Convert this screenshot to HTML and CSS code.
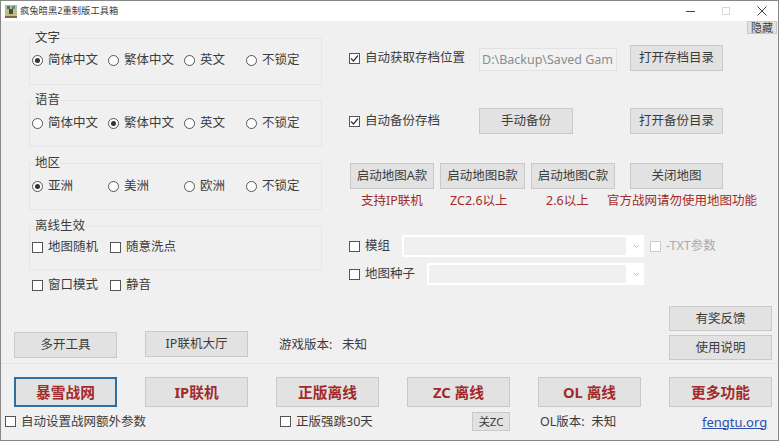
FILE: index.html
```
<!DOCTYPE html>
<html lang="zh-CN">
<head>
    <meta charset="utf-8" />
    <title>疯兔暗黑2重制版工具箱</title>
    <link rel="stylesheet" href="styles.css">
</head>
<body>
<div class="window">

    <header class="titlebar">
        <svg class="app-icon" width="12" height="13" viewBox="0 0 12 13">
            <rect width="12" height="13" fill="#a9c2a4"/>
            <rect x="2" y="1" width="3" height="3" fill="#5f7655"/>
            <rect x="7" y="1" width="3" height="3" fill="#74866a"/>
            <rect x="4" y="4" width="4" height="5" fill="#4c4c3c"/>
            <rect y="9" width="12" height="2" fill="#cdb878"/>
            <rect y="11" width="12" height="2" fill="#7d6a42"/>
        </svg>
        <span class="title">疯兔暗黑2重制版工具箱</span>
        <div class="win-btns">
            <svg width="9" height="9" viewBox="0 0 9 9"><path d="M0 4.5H9" stroke="#444"/></svg>
            <svg width="8" height="8" viewBox="0 0 8 8"><rect x=".5" y=".5" width="7" height="7" fill="none" stroke="#d8d8d8"/></svg>
            <svg width="10" height="10" viewBox="0 0 10 10"><path d="M.5 .5L9.5 9.5M9.5 .5L.5 9.5" stroke="#444"/></svg>
        </div>
    </header>

    <section class="top">
        <div class="left">
            <fieldset class="group">
                <legend>文字</legend>
                <div class="choices">
                    <label class="opt"><span class="radio radio--on"></span>简体中文</label>
                    <label class="opt"><span class="radio"></span>繁体中文</label>
                    <label class="opt"><span class="radio"></span>英文</label>
                    <label class="opt"><span class="radio"></span>不锁定</label>
                </div>
            </fieldset>
            <fieldset class="group">
                <legend>语音</legend>
                <div class="choices">
                    <label class="opt"><span class="radio"></span>简体中文</label>
                    <label class="opt"><span class="radio radio--on"></span>繁体中文</label>
                    <label class="opt"><span class="radio"></span>英文</label>
                    <label class="opt"><span class="radio"></span>不锁定</label>
                </div>
            </fieldset>
            <fieldset class="group">
                <legend>地区</legend>
                <div class="choices">
                    <label class="opt"><span class="radio radio--on"></span>亚洲</label>
                    <label class="opt"><span class="radio"></span>美洲</label>
                    <label class="opt"><span class="radio"></span>欧洲</label>
                    <label class="opt"><span class="radio"></span>不锁定</label>
                </div>
            </fieldset>
            <fieldset class="group group--short">
                <legend>离线生效</legend>
                <div class="checks">
                    <label class="opt"><span class="box"></span>地图随机</label>
                    <label class="opt"><span class="box"></span>随意洗点</label>
                </div>
            </fieldset>
            <div class="checks checks--loose">
                <label class="opt"><span class="box"></span>窗口模式</label>
                <label class="opt"><span class="box"></span>静音</label>
            </div>
        </div>

        <div class="right">
            <button class="btn btn--hide">隐藏</button>

            <div class="save-row">
                <label class="opt"><span class="box"><svg width="9" height="9" viewBox="0 0 9 9"><path d="M1 4.5L3.5 7L8 1.5" fill="none" stroke="#333" stroke-width="1.2"/></svg></span>自动获取存档位置</label>
                <div class="path">D:\Backup\Saved Gam</div>
                <button class="btn btn--tall">打开存档目录</button>
            </div>

            <div class="save-row save-row--backup">
                <label class="opt"><span class="box"><svg width="9" height="9" viewBox="0 0 9 9"><path d="M1 4.5L3.5 7L8 1.5" fill="none" stroke="#333" stroke-width="1.2"/></svg></span>自动备份存档</label>
                <button class="btn btn--tall btn--manual">手动备份</button>
                <button class="btn btn--tall">打开备份目录</button>
            </div>

            <div class="map-row">
                <button class="btn btn--tall">启动地图A款</button>
                <button class="btn btn--tall">启动地图B款</button>
                <button class="btn btn--tall">启动地图C款</button>
                <button class="btn btn--tall">关闭地图</button>
            </div>
            <div class="hints">
                <span>支持IP联机</span>
                <span>ZC2.6以上</span>
                <span>2.6以上</span>
                <span>官方战网请勿使用地图功能</span>
            </div>

            <div class="combo-row combo-row--mod">
                <label class="opt"><span class="box"></span>模组</label>
                <div class="combo combo--mod">
                    <svg width="7" height="5" viewBox="0 0 7 5"><path d="M1 1L3.5 3.5L6 1" fill="none" stroke="#bbb"/></svg>
                </div>
                <label class="opt opt--off"><span class="box"></span>-TXT参数</label>
            </div>
            <div class="combo-row">
                <label class="opt"><span class="box"></span>地图种子</label>
                <div class="combo combo--seed">
                    <svg width="7" height="5" viewBox="0 0 7 5"><path d="M1 1L3.5 3.5L6 1" fill="none" stroke="#bbb"/></svg>
                </div>
            </div>
        </div>
    </section>

    <section class="tools launch-grid">
        <button class="btn btn--tool">多开工具</button>
        <button class="btn btn--tool btn--up">IP联机大厅</button>
        <span class="version">游戏版本:&nbsp;&nbsp; 未知</span>
        <div class="stack">
            <button class="btn">有奖反馈</button>
            <button class="btn">使用说明</button>
        </div>
    </section>

    <div class="sep"></div>

    <section class="launch launch-grid">
        <button class="btn btn--big btn--focus">暴雪战网</button>
        <button class="btn btn--big">IP联机</button>
        <button class="btn btn--big">正版离线</button>
        <button class="btn btn--big">ZC 离线</button>
        <button class="btn btn--big">OL 离线</button>
        <button class="btn btn--big">更多功能</button>
    </section>

    <footer class="status">
        <label class="opt"><span class="box"></span>自动设置战网额外参数</label>
        <label class="opt"><span class="box"></span>正版强跳30天</label>
        <button class="btn btn--zc">关ZC</button>
        <span>OL版本:&nbsp; 未知</span>
        <a class="site" href="#">fengtu.org</a>
    </footer>
</div>
</body>
</html>
```

FILE: styles.css
```
:root{
    --line:#e6e6e6;
    --btn-border:#c9c9c9;
    --btn:#e2e2e2;
    --ink:#3c3c3c;
    --red:#a32a2a;
}
*{
    box-sizing:border-box;
}
body{
    margin:0;
    background:#fff;
    font-family:"Noto Sans","Noto Sans CJK SC",sans-serif;
    font-size:12.5px;
    line-height:16px;
    color:var(--ink);
}
.window{
    width:779px;
    height:441px;
    display:flex;
    flex-direction:column;
    background:#f0f0f0;
    border:1px solid #888;
    overflow:hidden;
}
.titlebar{
    height:20px;
    flex:none;
    display:flex;
    align-items:center;
    padding-left:4px;
    background:#fff;
}
.app-icon{
    margin-right:3px;
}
.title{
    font-size:9.3px;
}
.win-btns{
    margin-left:auto;
    display:flex;
    align-items:center;
    gap:27px;
    padding-right:11px;
}

/* top part, settings on the left and actions on the right */
.top{
    height:285px;
    flex:none;
    display:flex;
    gap:27px;
}
.left{
    width:321px;
    padding:10px 0 0 28px;
    flex:none;
}
.right{
    flex:1;
    display:flex;
    flex-direction:column;
}
.group{
    height:54px;
    margin:0 0 9px;
    padding:8px 0 0 2px;
    border:1px solid var(--line);
    min-width:0;
}
.group:first-child{
    margin-bottom:8px;
    padding-top:7px;
}
.group--short{
    height:51px;
    margin-bottom:7px;
    padding-top:6px;
}
.group legend{
    margin-left:3px;
    padding:0;
    line-height:14px;
}
.choices{
    display:grid;
    grid-template-columns:76px 76px 62px 1fr;
}
.checks{
    display:grid;
    grid-template-columns:78px 1fr;
}
.checks--loose{
    padding-left:3px;
}
.opt{
    display:flex;
    align-items:center;
    gap:5px;
    height:16px;
    white-space:nowrap;
}
.opt--off{
    color:#aaa;
}
.opt--off .box{
    border-color:#ccc;
}
.radio{
    width:11px;
    height:11px;
    flex:none;
    display:flex;
    align-items:center;
    justify-content:center;
    border:1px solid #555;
    border-radius:50%;
    background:#fff;
}
.radio--on::after{
    content:"";
    width:5px;
    height:5px;
    border-radius:50%;
    background:#333;
}
.box{
    width:11px;
    height:11px;
    flex:none;
    display:flex;
    align-items:center;
    justify-content:center;
    border:1px solid #555;
    background:#fff;
}

.btn{
    display:block;
    width:100%;
    height:25px;
    padding:0;
    font:inherit;
    color:var(--ink);
    background:var(--btn);
    border:1px solid var(--btn-border);
}
.btn--tall{
    height:26px;
}
.btn--hide{
    width:30px;
    height:13px;
    align-self:flex-end;
    margin-right:1px;
    font-size:11px;
    line-height:11px;
}
.btn--manual{
    width:94px;
}
.btn--tool{
    height:26px;
    align-self:end;
    margin-bottom:2px;
}
.btn--up{
    margin-bottom:3px;
}
.btn--big{
    height:30px;
    font-size:14.7px;
    font-weight:700;
    color:var(--red);
}
.btn--focus{
    border:2px solid #2f6f9f;
}
.btn--zc{
    width:38px;
    height:19px;
    font-size:11.5px;
}

.save-row{
    display:grid;
    grid-template-columns:130px 151px 93px;
    height:26px;
    margin-top:11px;
    align-items:center;
}
.save-row--backup{
    margin-top:37px;
}
.path{
    width:138px;
    height:23px;
    margin-top:3px;
    padding-left:2px;
    line-height:21px;
    color:#8c8c8c;
    background:#f2f2f2;
    border:1px solid #e2e2e2;
    overflow:hidden;
    white-space:nowrap;
}
.map-row{
    display:grid;
    grid-template-columns:84px 85px 84px 93px;
    column-gap:6px;
    margin:29px 0 0 1px;
}
.map-row .btn:last-child{
    margin-left:9px;
}
.hints{
    display:grid;
    grid-template-columns:89px 96px 61px auto;
    justify-content:start;
    margin:5px 0 0 12px;
    line-height:14px;
    color:var(--red);
    white-space:nowrap;
}
.combo-row{
    display:flex;
    align-items:center;
    height:22px;
    margin-top:6px;
}
.combo-row--mod{
    margin-top:27px;
}
.combo{
    height:22px;
    display:flex;
    align-items:center;
    justify-content:flex-end;
    padding-right:4px;
    background:linear-gradient(#f0f0f0,#f0f0f0) 2px 2px / calc(100% - 20px) 18px no-repeat #fff;
}
.combo--mod{
    width:242px;
    margin:0 6px 0 12px;
}
.combo--seed{
    width:217px;
    margin-left:12px;
}

/* bottom part, all of it on the same six columns */
.launch-grid{
    display:grid;
    grid-template-columns:repeat(6,103px);
    column-gap:28px;
    padding-left:13px;
}
.tools{
    height:54px;
    flex:none;
}
.version{
    align-self:end;
    margin:0 0 7px 3px;
}
.stack{
    grid-column:6;
    display:flex;
    flex-direction:column;
    gap:4px;
}
.sep{
    height:1px;
    flex:none;
    margin-top:3px;
    background:var(--line);
}
.launch{
    flex:none;
    margin-top:13px;
}
.status{
    display:grid;
    grid-template-columns:275px 192px 68px 162px auto;
    align-items:center;
    height:19px;
    margin-top:5px;
    padding-left:4px;
    white-space:nowrap;
}
.site{
    font-size:13px;
    color:#2a4fb0;
}
```
